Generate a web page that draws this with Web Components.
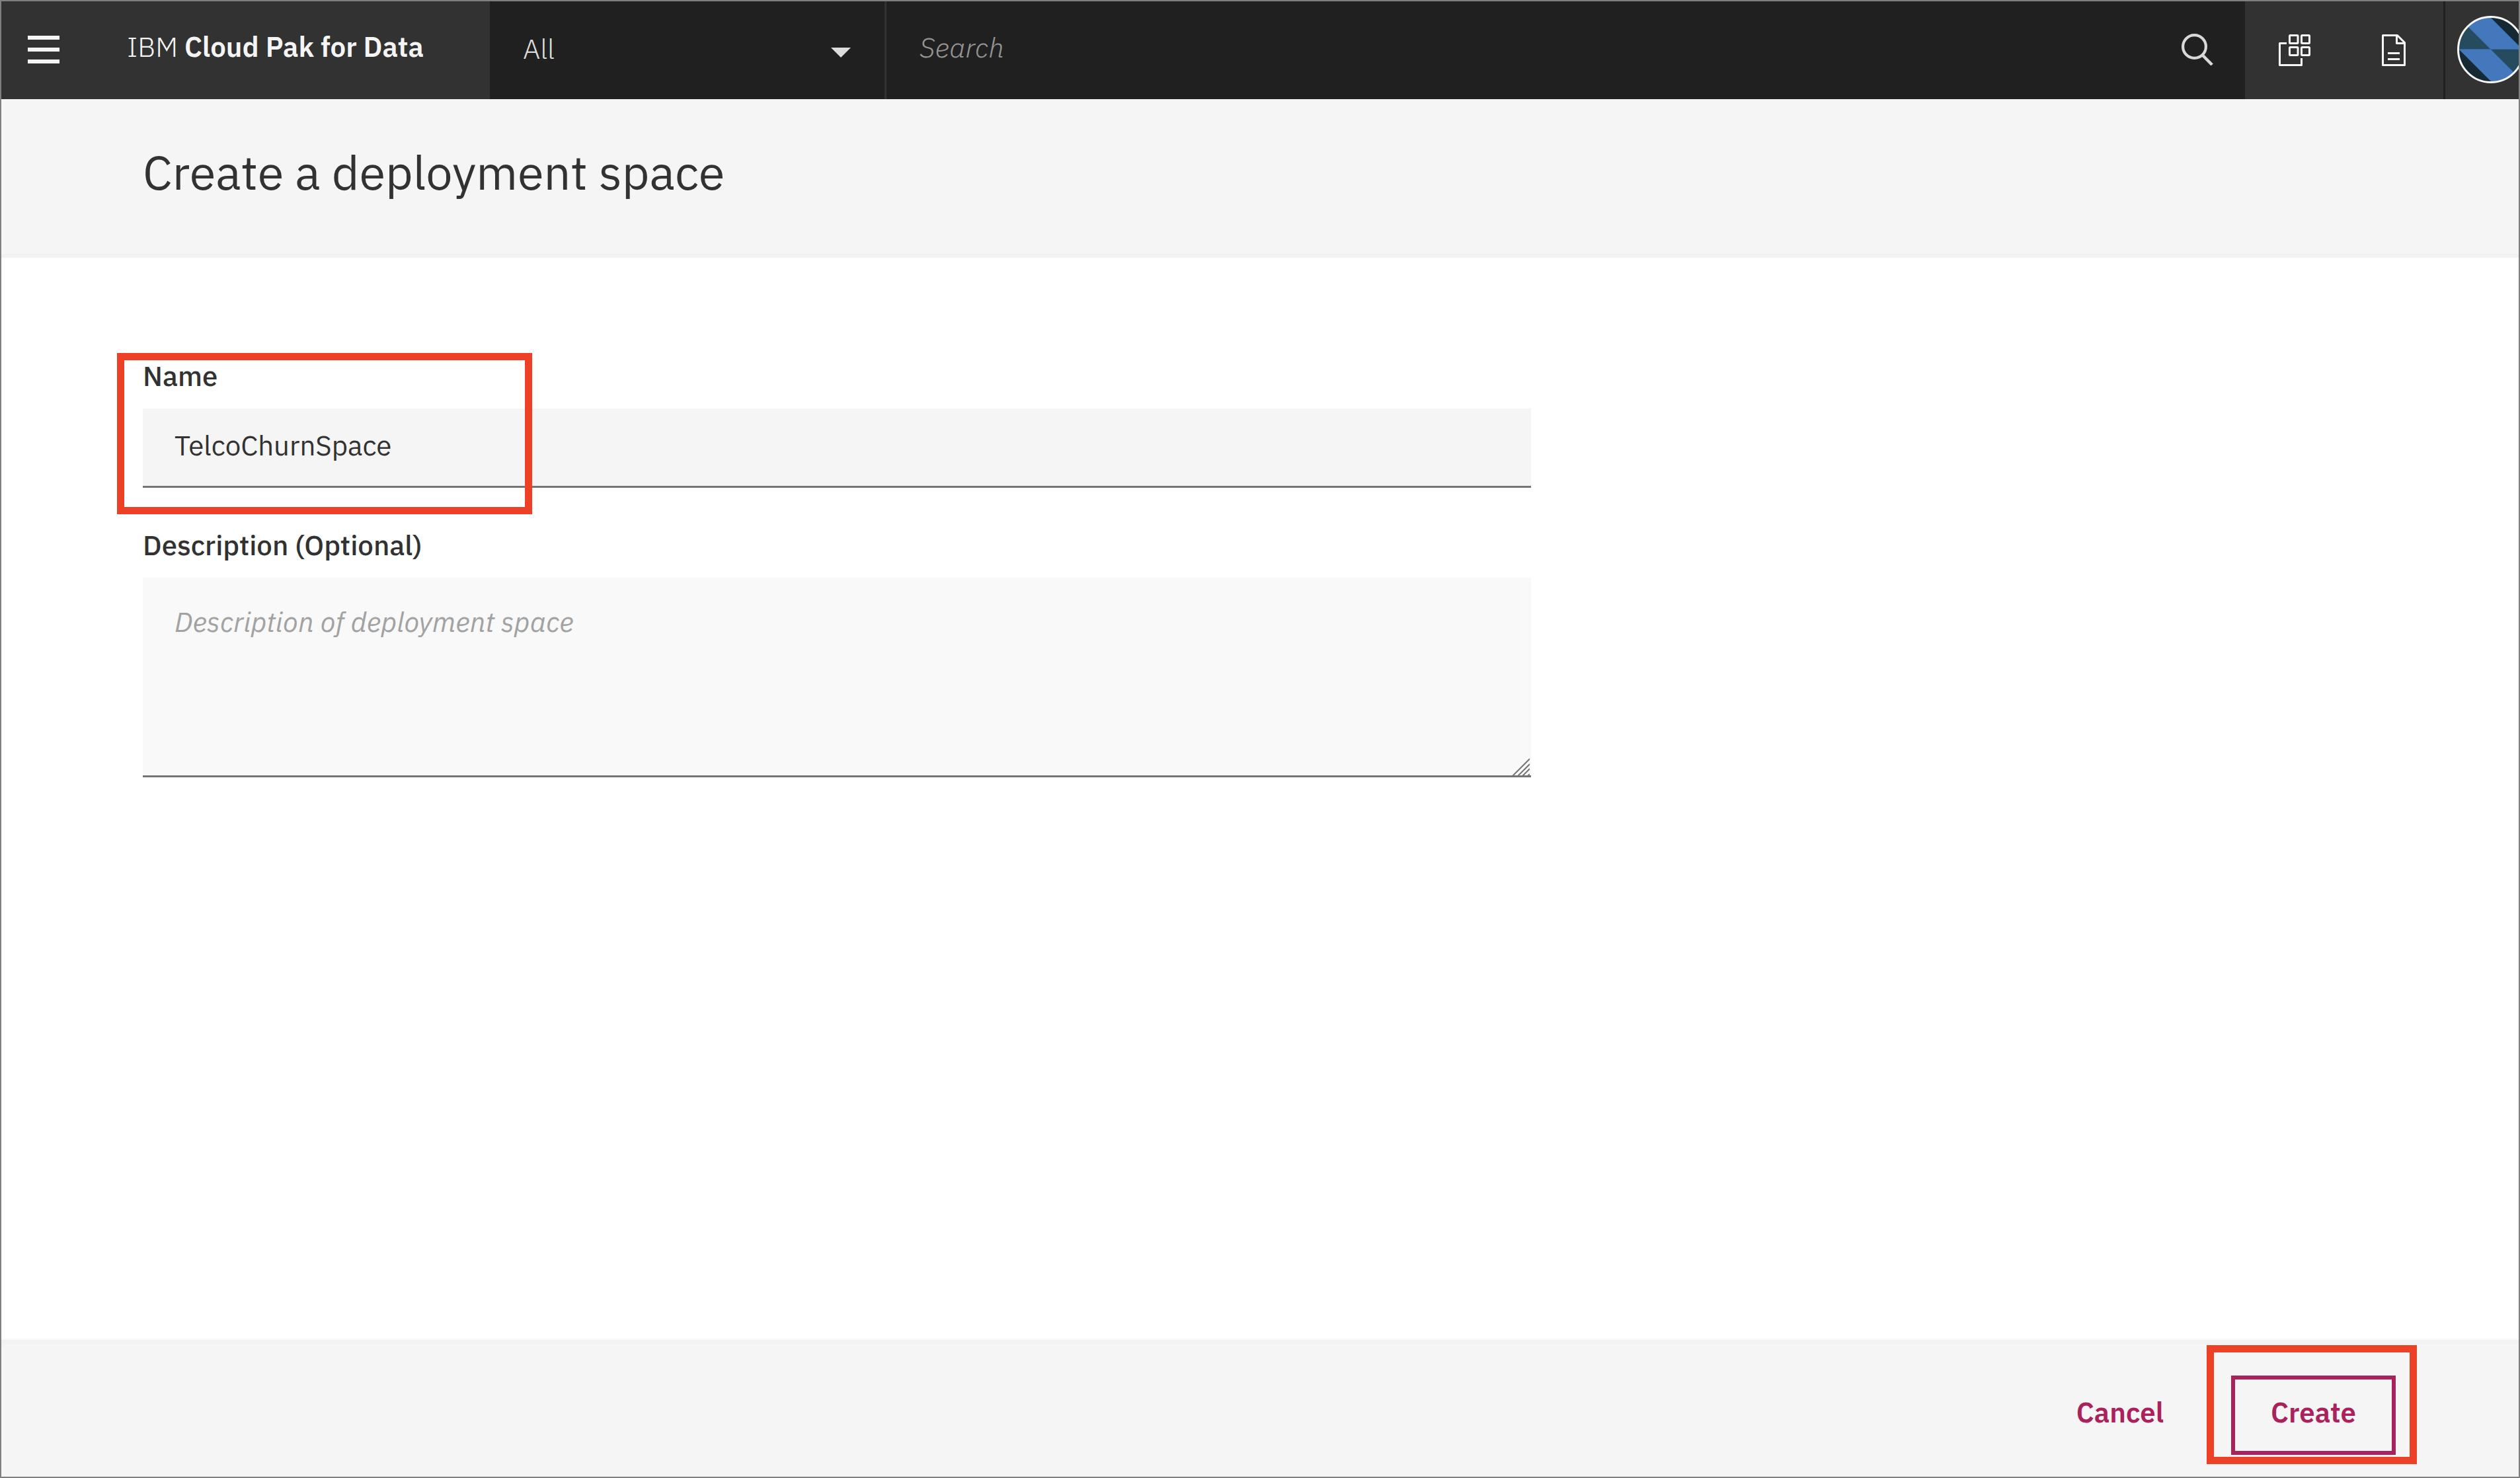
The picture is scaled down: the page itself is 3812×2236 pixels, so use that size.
<!DOCTYPE html>
<html lang="en">
<head>
<meta charset="utf-8">
<title>Create a deployment space</title>
<style>
  html, body { margin: 0; }
  body {
    font-family: "IBM Plex Sans", Roboto, "Liberation Sans", sans-serif;
    font-size: 42px;
    line-height: 54px;
    color: #323232;
    background: #fff;
    --accent: #a9225c;
    --mark: #ec4126;
    --panel: #f5f5f5;
    --rule: #757575;
  }
</style>
</head>
<body>
<app-page>
  <app-header slot="header"></app-header>
  <page-title slot="title">Create a deployment space</page-title>
  <space-form></space-form>
  <action-bar slot="footer"></action-bar>
</app-page>

<script>
const define = (name, markup) => {
  const template = document.createElement('template');
  template.innerHTML = markup;
  customElements.define(name, class extends HTMLElement {
    constructor() {
      super();
      this.attachShadow({ mode: 'open' }).append(template.content.cloneNode(true));
    }
  });
};

define('app-page', `
  <style>
    :host { display: flex; flex-direction: column; box-sizing: border-box; min-height: 100vh; border: 2px solid #808080; overflow: hidden; }
    main { flex: 1; padding: 152px 214px 0; }
  </style>
  <slot name="header"></slot>
  <slot name="title"></slot>
  <main><slot></slot></main>
  <slot name="footer"></slot>`);

define('brand-bar', `
  <style>
    :host { display: flex; align-items: center; box-sizing: border-box; width: 739px; padding-left: 40px; gap: 102px; background: #323232; color: #f5f5f5; }
    button { display: flex; padding: 0 0 2px; border: 0; background: none; color: inherit; }
    a { color: inherit; text-decoration: none; font-weight: 300; white-space: nowrap; padding-bottom: 10px; }
    b { font-weight: 600; }
  </style>
  <button aria-label="Menu"><svg width="48" height="42" fill="currentColor"><path d="M0 0h48v6H0zM0 18h48v6H0zM0 36h48v6H0z"/></svg></button>
  <a href="#">IBM <b>Cloud Pak for Data</b></a>`);

define('scope-select', `
  <style>
    :host { display: grid; align-items: center; box-sizing: border-box; width: 600px; border-right: 3px solid #323232; }
    select, svg { grid-area: 1 / 1; }
    select { appearance: none; width: 100%; height: 100%; margin: 0; padding: 0 50px 4px; border: 0; background: none; color: #dcdcdc; font: inherit; font-weight: 300; }
    svg { justify-self: end; margin: 6px 51px 0 0; pointer-events: none; }
  </style>
  <select aria-label="Scope"><option>All</option></select>
  <svg width="30" height="15"><path d="M0 0h30L15 15z" fill="#dcdcdc"/></svg>`);

define('search-box', `
  <style>
    :host { display: flex; align-items: center; flex: 1; padding-right: 48px; }
    input { flex: 1; min-width: 0; height: 100%; box-sizing: border-box; margin: 0; padding: 0 50px 10px; border: 0; background: none; color: #dcdcdc; font: inherit; }
    input::placeholder { color: #959595; font-style: italic; font-weight: 300; opacity: 1; }
    button { display: flex; padding: 0 0 2px; border: 0; background: none; }
  </style>
  <input type="text" placeholder="Search" aria-label="Search">
  <button aria-label="Run search"><svg width="48" height="48" fill="none" stroke="#d8d8d8"><circle cx="19.5" cy="19.5" r="17.4" stroke-width="4.2"/><path d="M31.8 32.5L46.2 47" stroke-width="4.6"/></svg></button>`);

define('header-tools', `
  <style>
    :host { display: flex; background: #323232; color: #f8f8f8; }
    button { display: flex; align-items: center; justify-content: center; box-sizing: border-box; width: 150px; padding: 0; border: 0; background: none; color: inherit; }
    svg { flex: none; }
    .avatar { width: 114px; justify-content: flex-start; padding: 0 0 2px 18px; border-left: 3px solid #202020; overflow: hidden; }
  </style>
  <button aria-label="Services"><svg width="48" height="48" fill="none" stroke="currentColor" stroke-width="3" stroke-linejoin="round">
    <rect x="16.5" y="1.5" width="12.5" height="12" rx="1"/><rect x="34.5" y="1.5" width="12" height="12" rx="1"/>
    <rect x="16.5" y="19.5" width="12.5" height="12" rx="1"/><rect x="34.5" y="19.5" width="12" height="12" rx="1"/>
    <path d="M12 13.5H1.5V46.5H34.5V36"/></svg></button>
  <button aria-label="Documentation"><svg width="36" height="48" fill="none" stroke="currentColor" stroke-width="3" stroke-linejoin="round">
    <path d="M1.5 1.5H23.5L34.5 12.5V46.5H1.5zM22.5 1.5V13.5H34.5M9 28.5H27M9 37.5H27"/></svg></button>
  <button class="avatar" aria-label="Profile"><svg width="102" height="102" viewBox="-51 -51 102 102">
    <defs><clipPath id="round"><circle r="49"/></clipPath></defs>
    <g clip-path="url(#round)">
      <path d="M-51-51H51V51H-51z" fill="#274b5e"/>
      <path d="M0-48L48 0H51V-51H-3zM-48 0L0 48L3 51H-51V0z" fill="#142934"/>
      <path d="M-51-51L0 0H48L-3-51zM-48 0H0L51 51H3z" fill="#4478bc"/>
      <path d="M-48-.5H48" stroke="#3a67a0" stroke-width="1"/>
    </g>
    <circle r="49.5" fill="none" stroke="#f8f8f8" stroke-width="3"/></svg></button>`);

define('app-header', `
  <style>:host { display: flex; height: 148px; background: #202020; }</style>
  <brand-bar></brand-bar>
  <scope-select></scope-select>
  <search-box></search-box>
  <header-tools></header-tools>`);

define('page-title', `
  <style>
    :host { display: block; padding: 64px 214px 78px; background: var(--panel); border-bottom: 6px solid #f2f2f2; }
    h1 { margin: 0; font-size: 72px; line-height: 92px; font-weight: 400; }
  </style>
  <h1><slot></slot></h1>`);

define('space-form', `
  <style>
    :host { display: block; }
    form { display: flex; flex-direction: column; gap: 60px; max-width: 2100px; }
    .field { position: relative; display: flex; flex-direction: column; gap: 22px; }
    label { font-weight: 500; }
    input, textarea { display: block; box-sizing: border-box; width: 100%; margin: 0; padding: 0 48px; border: 0; border-bottom: 3px solid var(--rule); border-radius: 0; outline: 0; color: inherit; font: inherit; background: var(--panel); }
    input { height: 120px; padding-bottom: 6px; }
    textarea { height: 302px; padding-top: 40px; background: #f9f9f9; resize: none; }
    textarea::placeholder { color: #a2a2a2; font-style: italic; opacity: 1; }
    .mark { position: absolute; left: -39px; top: -8px; box-sizing: border-box; width: 628px; height: 244px; border: 11px solid var(--mark); pointer-events: none; }
    .grip { position: absolute; right: 2px; bottom: 1px; }
  </style>
  <form>
    <div class="field">
      <label for="name">Name</label>
      <input id="name" type="text" value="TelcoChurnSpace">
      <div class="mark"></div>
    </div>
    <div class="field">
      <label for="description">Description (Optional)</label>
      <textarea id="description" placeholder="Description of deployment space"></textarea>
      <svg class="grip" width="27" height="28" stroke="#757575" stroke-width="2"><path d="M0 28L27 1M8 28L27 9M15 28L27 16M23 28L27 24"/></svg>
    </div>
  </form>`);

define('action-bar', `
  <style>
    :host { position: relative; display: flex; justify-content: flex-end; align-items: flex-start; gap: 42px; padding: 48px 186px 33px; background: var(--panel); border-top: 6px solid #f2f2f2; box-shadow: 0 0 6px #0000000d; }
    button { box-sizing: border-box; height: 120px; margin: 0; padding: 0 54px 8px; border: 6px solid transparent; background: none; color: var(--accent); font: inherit; font-weight: 600; text-align: left; }
    .primary { width: 249px; border-color: var(--accent); }
    .target { position: relative; display: flex; }
    .target::after { content: ""; position: absolute; inset: -46px -32px -14px -37px; border: 11px solid var(--mark); pointer-events: none; }
  </style>
  <button>Cancel</button>
  <div class="target"><button class="primary">Create</button></div>`);
</script>
</body>
</html>
